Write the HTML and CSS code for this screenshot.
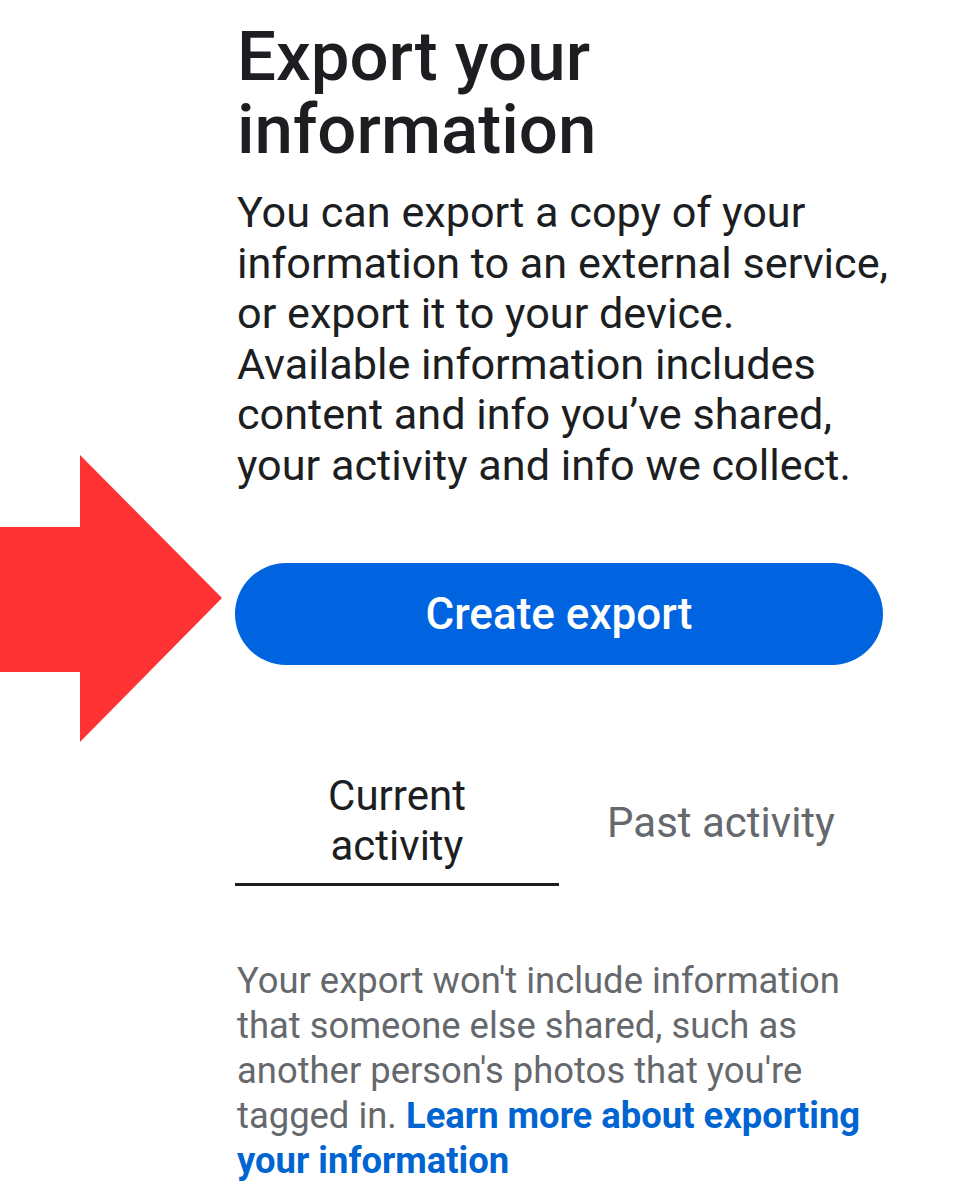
FILE: index.html
```html
<!DOCTYPE html>
<html lang="en">
<head>
<meta charset="utf-8">
<title>Export your information</title>
<link rel="stylesheet" href="styles.css">
</head>
<body>
<main class="page">
  <h1 class="title">Export your information</h1>
  <p class="intro">You can export a copy of your information to an external service, or export it to your device. Available information includes content and info you’ve shared, your activity and info we collect.</p>
  <button class="create">Create export</button>
  <div class="tabs">
    <div class="tab active">Current<br>activity</div>
    <div class="tab">Past activity</div>
  </div>
  <p class="note">Your export won't include information that someone else shared, such as another person's photos that you're tagged in. <a class="link" href="#">Learn more about exporting your information</a></p>
</main>
<svg class="arrow" width="224" height="288" viewBox="0 0 224 288" aria-hidden="true">
  <polygon points="0,72 80,72 80,0 222,143 80,287 80,217 0,217" fill="#ff3333"/>
</svg>
</body>
</html>
```
FILE: styles.css
```css
html, body {
  margin: 0;
  padding: 0;
  background: #ffffff;
}
body {
  font-family: Roboto, "Liberation Sans", sans-serif;
  color: #1c1e21;
  position: relative;
  width: 960px;
  height: 1200px;
  overflow: hidden;
}
.page {
  margin-left: 237px;
  width: 680px;
  padding-top: 20px;
}
.title {
  margin: 0;
  font-size: 69px;
  line-height: 73px;
  font-weight: 500;
  letter-spacing: 0;
  width: 440px;
}
.intro {
  margin: 22px 0 0;
  width: 670px;
  font-size: 43.2px;
  line-height: 50.5px;
  font-weight: 400;
}
.create {
  display: block;
  margin: 72px 0 0 -2px;
  width: 648px;
  height: 102px;
  border: none;
  border-radius: 51px;
  background: #0064e0;
  color: #ffffff;
  font-family: inherit;
  font-size: 44px;
  font-weight: 500;
}
.tabs {
  display: flex;
  margin: 106px 0 0 -2px;
  width: 648px;
}
.tab {
  flex: 1;
  display: flex;
  align-items: center;
  justify-content: center;
  text-align: center;
  font-size: 42px;
  line-height: 50px;
  font-weight: 400;
  color: #65686c;
  padding-bottom: 12px;
}
.tab.active {
  color: #1c1e21;
  border-bottom: 3px solid #1c1e21;
}
.note {
  margin: 72px 0 0;
  width: 660px;
  font-size: 36.4px;
  line-height: 45px;
  color: #65686c;
}
.link {
  color: #0064d1;
  font-weight: 700;
  text-decoration: none;
}
.arrow {
  position: absolute;
  left: 0;
  top: 455px;
}
```
